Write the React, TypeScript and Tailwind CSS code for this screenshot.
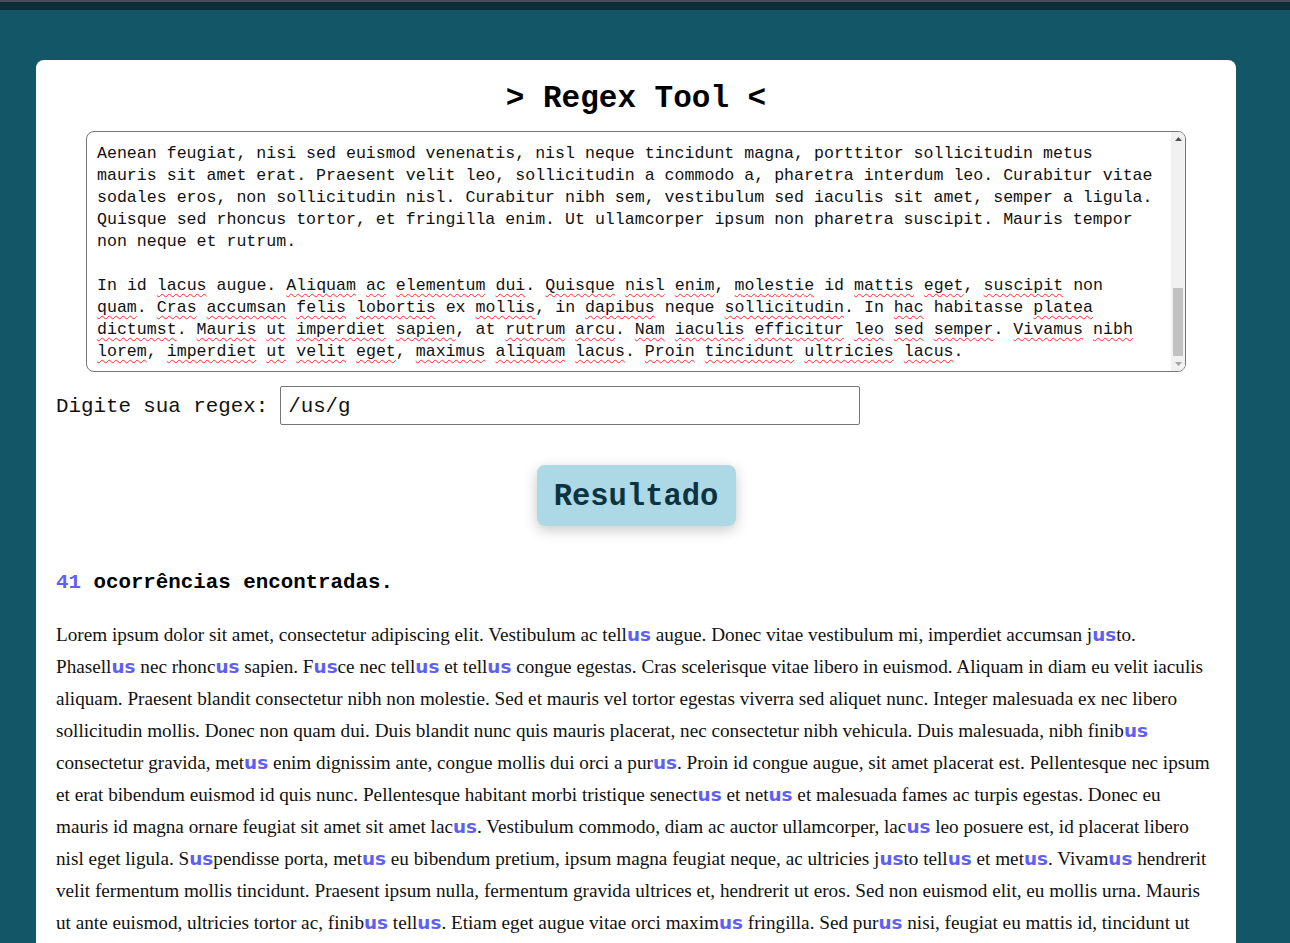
import { useEffect, useRef } from 'react';

const loremText =
  'Lorem ipsum dolor sit amet, consectetur adipiscing elit. Vestibulum ac tellus augue. Donec vitae vestibulum mi, imperdiet accumsan justo. Phasellus nec rhoncus sapien. Fusce nec tellus et tellus congue egestas. Cras scelerisque vitae libero in euismod. Aliquam in diam eu velit iaculis aliquam. Praesent blandit consectetur nibh non molestie. Sed et mauris vel tortor egestas viverra sed aliquet nunc. Integer malesuada ex nec libero sollicitudin mollis. Donec non quam dui. Duis blandit nunc quis mauris placerat, nec consectetur nibh vehicula. Duis malesuada, nibh finibus consectetur gravida, metus enim dignissim ante, congue mollis dui orci a purus. Proin id congue augue, sit amet placerat est. Pellentesque nec ipsum et erat bibendum euismod id quis nunc. Pellentesque habitant morbi tristique senectus et netus et malesuada fames ac turpis egestas. Donec eu mauris id magna ornare feugiat sit amet sit amet lacus. Vestibulum commodo, diam ac auctor ullamcorper, lacus leo posuere est, id placerat libero nisl eget ligula. Suspendisse porta, metus eu bibendum pretium, ipsum magna feugiat neque, ac ultricies justo tellus et metus. Vivamus hendrerit velit fermentum mollis tincidunt. Praesent ipsum nulla, fermentum gravida ultrices et, hendrerit ut eros. Sed non euismod elit, eu mollis urna. Mauris ut ante euismod, ultricies tortor ac, finibus tellus. Etiam eget augue vitae orci maximus fringilla. Sed purus nisi, feugiat eu mattis id, tincidunt ut lorem.';

const extraText =
  'Nunc at lectus quis nisi ullamcorper tempus. Sed dapibus, massa vel faucibus suscipit, dolor nibh volutpat ante, vitae hendrerit nulla est in mi. Donec sagittis arcu at urna pretium, sit amet aliquet enim accumsan.';

const aeneanText =
  'Aenean feugiat, nisi sed euismod venenatis, nisl neque tincidunt magna, porttitor sollicitudin metus mauris sit amet erat. Praesent velit leo, sollicitudin a commodo a, pharetra interdum leo. Curabitur vitae sodales eros, non sollicitudin nisl. Curabitur nibh sem, vestibulum sed iaculis sit amet, semper a ligula. Quisque sed rhoncus tortor, et fringilla enim. Ut ullamcorper ipsum non pharetra suscipit. Mauris tempor non neque et rutrum.';

const lastText =
  'In id lacus augue. Aliquam ac elementum dui. Quisque nisl enim, molestie id mattis eget, suscipit non quam. Cras accumsan felis lobortis ex mollis, in dapibus neque sollicitudin. In hac habitasse platea dictumst. Mauris ut imperdiet sapien, at rutrum arcu. Nam iaculis efficitur leo sed semper. Vivamus nibh lorem, imperdiet ut velit eget, maximus aliquam lacus. Proin tincidunt ultricies lacus.';

// words the spellchecker leaves alone
const knownWords = new Set(['In', 'id', 'augue', 'non', 'ex', 'in', 'neque', 'habitasse', 'at']);

function Misspelled({ text }: { text: string }) {
  return (
    <>
      {text.split(/([A-Za-z]+)/).map((part, i) =>
        /^[A-Za-z]+$/.test(part) && !knownWords.has(part) ? (
          <span
            key={i}
            className="underline decoration-wavy decoration-[#ff2a2a] decoration-1 underline-offset-[3px]"
          >
            {part}
          </span>
        ) : (
          <span key={i}>{part}</span>
        )
      )}
    </>
  );
}

function Highlighted({ text }: { text: string }) {
  return (
    <>
      {text.split(/(us)/).map((part, i) =>
        part === 'us' ? (
          <span key={i} className="font-['DejaVu_Sans',sans-serif] text-[18.4px] font-bold text-[#5f5ff5]">
            {part}
          </span>
        ) : (
          <span key={i}>{part}</span>
        )
      )}
    </>
  );
}

function Scrollbar() {
  return (
    <div className="flex w-[14px] flex-col bg-[#f1f1f1]">
      <div className="flex h-[14px] items-center justify-center">
        <svg width="7" height="4" viewBox="0 0 7 4">
          <polygon points="3.5,0 7,4 0,4" fill="#505050" />
        </svg>
      </div>
      <div className="flex flex-1 flex-col justify-end px-[2px] pb-[1px]">
        <div className="h-[68px] bg-[#c1c1c1]" />
      </div>
      <div className="flex h-[14px] items-center justify-center">
        <svg width="7" height="4" viewBox="0 0 7 4">
          <polygon points="0,0 7,0 3.5,4" fill="#a3a3a3" />
        </svg>
      </div>
    </div>
  );
}

export default function App() {
  const boxRef = useRef<HTMLDivElement>(null);

  useEffect(() => {
    if (boxRef.current) {
      boxRef.current.scrollTop = boxRef.current.scrollHeight;
    }
  }, []);

  const fullText = [loremText, extraText, aeneanText, lastText].join(' ');

  return (
    <div className="h-screen overflow-hidden bg-[#125667]">
      <div className="h-[10px] border-t-2 border-[#4a4c5a] bg-[#0a2f39]" />

      <div className="ml-[36px] mt-[50px] w-[1200px] rounded-lg bg-white px-5 pt-[19px] pb-10 font-['Liberation_Mono',monospace] text-[#111]">
        <h1 className="text-center text-[31px] font-bold leading-[40px] text-black">
          &gt; Regex Tool &lt;
        </h1>

        <div className="mx-auto mt-[12px] flex h-[241px] w-[1100px] overflow-hidden rounded-lg border border-[#767676]">
          <div
            ref={boxRef}
            className="flex-1 overflow-hidden whitespace-pre-wrap pl-[10px] pr-[16px] pt-[10px] pb-[8px] text-[16.6px] leading-[22px] text-[#111]"
          >
            {loremText}
            {'\n\n'}
            {extraText}
            {'\n\n'}
            {aeneanText}
            {'\n\n'}
            <Misspelled text={lastText} />
          </div>
          <Scrollbar />
        </div>

        <div className="mt-[14px] flex items-center gap-[12px] text-[20.8px]">
          <label htmlFor="regex" className="pt-[3px]">Digite sua regex:</label>
          <input
            id="regex"
            defaultValue="/us/g"
            className="h-[39px] w-[580px] rounded-[2px] border border-[#767676] px-[7px] pt-[2px] text-[20.8px] text-[#111] outline-none"
          />
        </div>

        <div className="mt-10 flex justify-center">
          <button className="h-[61px] w-[199px] rounded-lg bg-[#add8e6] pt-[5px] text-[30.5px] font-bold text-[#0b3440] shadow-[0_4px_14px_rgba(0,0,0,0.22)]">
            Resultado
          </button>
        </div>

        <h2 className="mt-[43px] text-[20.8px] font-bold leading-[28px] text-black">
          <span className="text-[#5f5ff5]">41</span> ocorrências encontradas.
        </h2>

        <p className="mt-[22px] font-['Liberation_Serif',serif] text-[19.2px] leading-[32px] text-[#111]">
          <Highlighted text={fullText} />
        </p>
      </div>
    </div>
  );
}
